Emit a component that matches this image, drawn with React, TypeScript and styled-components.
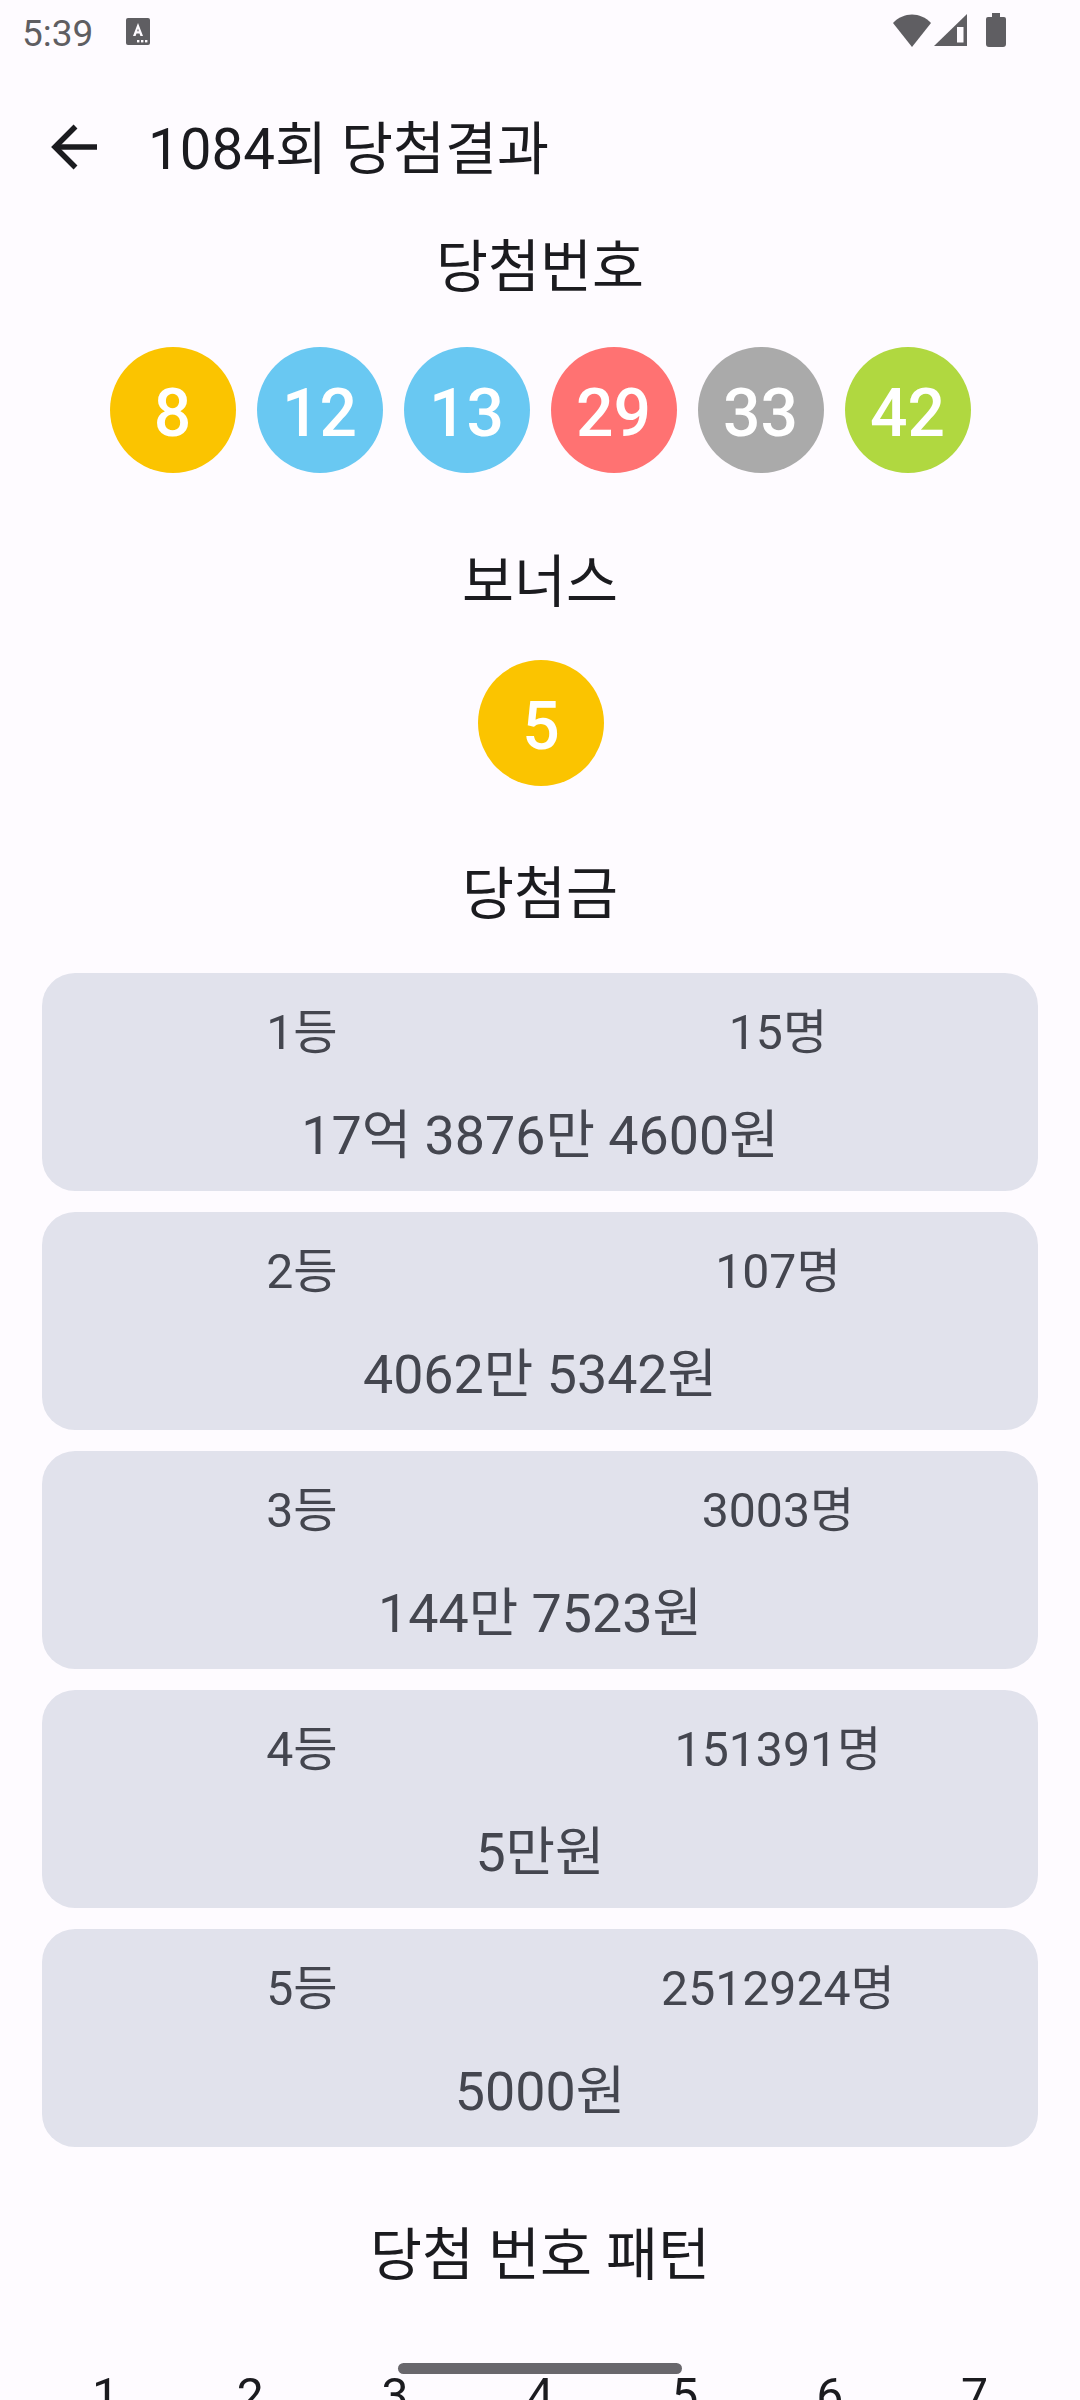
import React from "react";
import styled, { createGlobalStyle } from "styled-components";

const Global = createGlobalStyle`
  html, body { margin: 0; padding: 0; background: #fefbff; }
  * { box-sizing: border-box; }
`;

const Screen = styled.div`
  position: relative;
  width: 1080px;
  height: 2400px;
  overflow: hidden;
  background: #fefbff;
  font-family: Roboto, "Noto Sans CJK KR", sans-serif;
  color: #1b1b1f;
`;

const StatusBar = styled.div`
  height: 66px;
  padding: 0 74px 0 22px;
  display: flex;
  align-items: center;
  color: #5f5e62;
`;

const Clock = styled.span`
  font-size: 37px;
  margin-right: 33px;
`;

const NoticeSlot = styled.div`
  display: flex;
  margin-bottom: 3px;
`;

const StatusSpacer = styled.div`
  flex: 1;
`;

const StatusIcons = styled.div`
  display: flex;
  align-items: center;
  margin-bottom: 6px;
`;

const TopBar = styled.div`
  height: 154px;
  display: flex;
  align-items: center;
  padding-left: 42px;
  padding-top: 8px;
`;

const BackButton = styled.div`
  width: 66px;
  height: 66px;
  margin-right: 40px;
  display: flex;
  align-items: center;
  justify-content: center;
`;

const Title = styled.h1`
  margin: 6px 0 0;
  font-size: 56.5px;
  font-weight: 400;
  line-height: 80px;
`;

const SectionTitle = styled.h2<{ $top: number }>`
  margin: ${(p) => p.$top}px 0 0;
  text-align: center;
  font-size: 56.5px;
  font-weight: 400;
  line-height: 80px;
`;

const BallRow = styled.div<{ $top: number; $lead?: number }>`
  display: flex;
  justify-content: center;
  gap: 21px;
  margin-top: ${(p) => p.$top}px;
  padding-left: ${(p) => p.$lead ?? 0}px;
`;

const Ball = styled.div<{ $color: string }>`
  width: 126px;
  height: 126px;
  padding-top: 7px;
  border-radius: 50%;
  background: ${(p) => p.$color};
  color: #ffffff;
  display: flex;
  align-items: center;
  justify-content: center;
  font-size: 66px;
  font-weight: 500;
`;

const PrizeList = styled.div`
  display: flex;
  flex-direction: column;
  gap: 21px;
  margin: 38px 42px 0;
`;

const PrizeCard = styled.div`
  height: 218px;
  padding: 30px 22px 0;
  border-radius: 33px;
  background: #e1e2ec;
  color: #44464f;
`;

const PrizeRow = styled.div`
  display: grid;
  grid-template-columns: 1fr 1fr;
  text-align: center;
  font-size: 48.2px;
  line-height: 60px;
`;

const PrizeAmount = styled.div`
  margin-top: 43px;
  text-align: center;
  font-size: 53.8px;
  line-height: 60px;
`;

const PatternHeader = styled.div`
  display: grid;
  grid-template-columns: repeat(7, 1fr);
  margin: 70px 33px 0;
  text-align: center;
  font-size: 48.2px;
  line-height: 60px;
  color: #1b1b1f;
`;

const HomeBar = styled.div`
  position: absolute;
  left: 398px;
  top: 2363px;
  width: 284px;
  height: 11px;
  border-radius: 6px;
  background: #69676c;
`;

const balls = [
  { n: 8, c: "#fbc400" },
  { n: 12, c: "#69c8f2" },
  { n: 13, c: "#69c8f2" },
  { n: 29, c: "#ff7272" },
  { n: 33, c: "#aaaaaa" },
  { n: 42, c: "#b0d840" },
];

const prizes = [
  { rank: "1등", people: "15명", amount: "17억 3876만 4600원" },
  { rank: "2등", people: "107명", amount: "4062만 5342원" },
  { rank: "3등", people: "3003명", amount: "144만 7523원" },
  { rank: "4등", people: "151391명", amount: "5만원" },
  { rank: "5등", people: "2512924명", amount: "5000원" },
];

const NoticeIcon = () => (
  <svg width="24" height="27" viewBox="0 0 24 27">
    <rect width="24" height="27" rx="2" fill="#5f5e62" />
    <path d="M12 5 L17 18 H14.4 L13.5 15.4 H10.5 L9.6 18 H7 Z M11.2 13.2 H12.8 L12 10.4 Z" fill="#fefbff" fillRule="evenodd" />
    <rect x="11" y="22" width="2.4" height="2.4" fill="#fefbff" />
    <rect x="15" y="22" width="2.4" height="2.4" fill="#fefbff" />
    <rect x="19" y="22" width="2.4" height="2.4" fill="#fefbff" />
  </svg>
);

const WifiIcon = () => (
  <svg width="38" height="33" viewBox="0 0 38 33">
    <path d="M0 9 C10.5 -2.5 27.5 -2.5 38 9 L19 33 Z" fill="#5f5e62" />
  </svg>
);

const SignalIcon = () => (
  <svg width="33" height="32" viewBox="0 0 33 32" style={{ marginLeft: 3 }}>
    <path d="M0 32 L33 0 V32 Z" fill="#5f5e62" />
    <path d="M23 13 H29.5 V28.5 H23 Z" fill="#fefbff" />
  </svg>
);

const BatteryIcon = () => (
  <svg width="20" height="34" viewBox="0 0 20 34" style={{ marginLeft: 19 }}>
    <path d="M6 0 H14 V4 H18 Q20 4 20 6 V31 Q20 34 17 34 H3 Q0 34 0 31 V6 Q0 4 2 4 H6 Z" fill="#5f5e62" />
  </svg>
);

const BackArrow = () => (
  <svg width="66" height="66" viewBox="0 0 66 66" fill="none" stroke="#1b1b1f" strokeWidth="5.5">
    <path d="M55 33 H13" />
    <path d="M33.5 12.5 L13 33 L33.5 53.5" />
  </svg>
);

export default function App() {
  return (
    <Screen>
      <Global />
      <StatusBar>
        <Clock>5:39</Clock>
        <NoticeSlot>
          <NoticeIcon />
        </NoticeSlot>
        <StatusSpacer />
        <StatusIcons>
          <WifiIcon />
          <SignalIcon />
          <BatteryIcon />
        </StatusIcons>
      </StatusBar>
      <TopBar>
        <BackButton>
          <BackArrow />
        </BackButton>
        <Title>1084회 당첨결과</Title>
      </TopBar>
      <SectionTitle $top={8}>당첨번호</SectionTitle>
      <BallRow $top={39}>
        {balls.map((b) => (
          <Ball key={b.n} $color={b.c}>{b.n}</Ball>
        ))}
      </BallRow>
      <SectionTitle $top={70}>보너스</SectionTitle>
      <BallRow $top={37} $lead={2}>
        <Ball $color="#fbc400">5</Ball>
      </BallRow>
      <SectionTitle $top={69}>당첨금</SectionTitle>
      <PrizeList>
        {prizes.map((p) => (
          <PrizeCard key={p.rank}>
            <PrizeRow>
              <div>{p.rank}</div>
              <div>{p.people}</div>
            </PrizeRow>
            <PrizeAmount>{p.amount}</PrizeAmount>
          </PrizeCard>
        ))}
      </PrizeList>
      <SectionTitle $top={69}>당첨 번호 패턴</SectionTitle>
      <PatternHeader>
        {[1, 2, 3, 4, 5, 6, 7].map((n) => (
          <div key={n}>{n}</div>
        ))}
      </PatternHeader>
      <HomeBar />
    </Screen>
  );
}
